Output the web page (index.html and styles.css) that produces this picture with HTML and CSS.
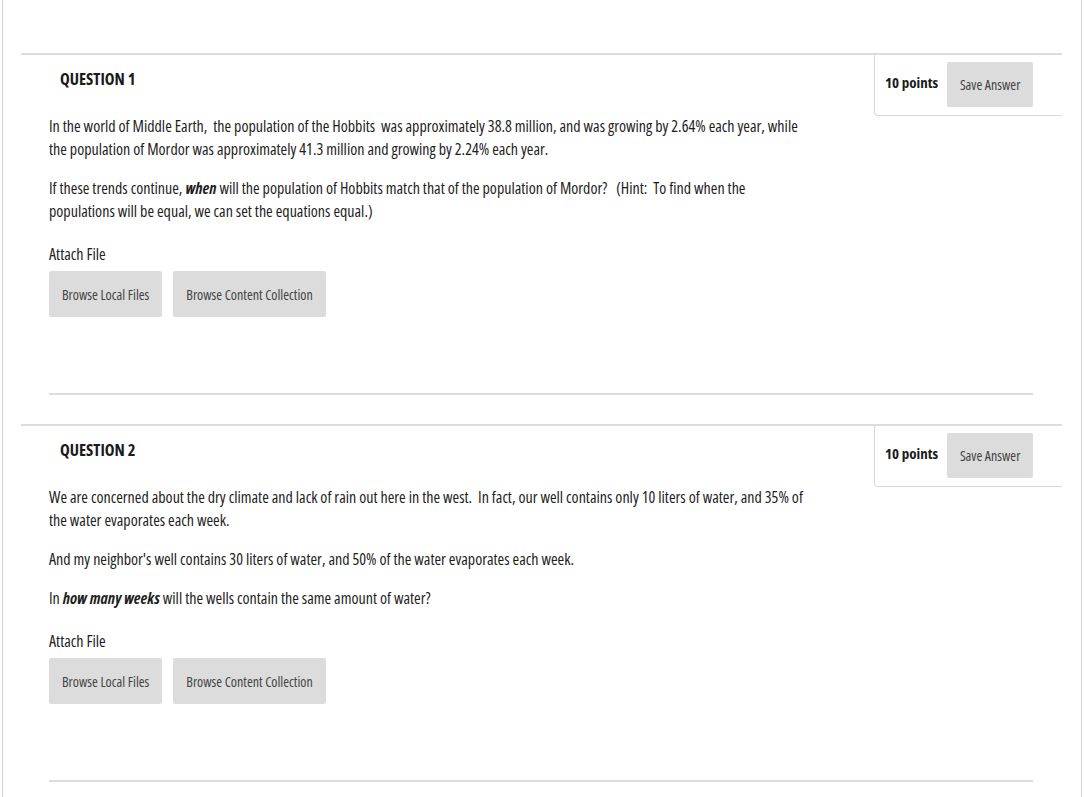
FILE: index.html
```html
<!DOCTYPE html>
<html lang="en">
<head>
<meta charset="utf-8">
<title>Test</title>
<link rel="stylesheet" href="styles.css">
</head>
<body>
<div class="page">
  <section class="question">
    <header class="q-head">
      <h3 class="q-title">QUESTION 1</h3>
      <div class="q-points">
        <span class="points">10 points</span>
        <button class="btn save">Save Answer</button>
      </div>
    </header>
    <div class="q-body">
      <p class="txt">In the world of Middle Earth,&nbsp; the population of the Hobbits&nbsp; was approximately 38.8 million, and was growing by 2.64% each year, while<br>the population of Mordor was approximately 41.3 million and growing by 2.24% each year.</p>
      <p class="txt">If these trends continue, <b><i>when</i></b> will the population of Hobbits match that of the population of Mordor?&nbsp;&nbsp; (Hint:&nbsp; To find when the<br>populations will be equal, we can set the equations equal.)</p>
      <div class="attach">Attach File</div>
      <div class="btn-row">
        <button class="btn">Browse Local Files</button>
        <button class="btn">Browse Content Collection</button>
      </div>
    </div>
    <hr class="sep">
  </section>

  <section class="question">
    <header class="q-head">
      <h3 class="q-title">QUESTION 2</h3>
      <div class="q-points">
        <span class="points">10 points</span>
        <button class="btn save">Save Answer</button>
      </div>
    </header>
    <div class="q-body">
      <p class="txt">We are concerned about the dry climate and lack of rain out here in the west.&nbsp; In fact, our well contains only 10 liters of water, and 35% of<br>the water evaporates each week.</p>
      <p class="txt">And my neighbor's well contains 30 liters of water, and 50% of the water evaporates each week.</p>
      <p class="txt">In <b><i>how many weeks</i></b> will the wells contain the same amount of water?</p>
      <div class="attach">Attach File</div>
      <div class="btn-row">
        <button class="btn">Browse Local Files</button>
        <button class="btn">Browse Content Collection</button>
      </div>
    </div>
    <hr class="sep">
  </section>
</div>
</body>
</html>
```

FILE: styles.css
```css
html, body {
  margin: 0;
  padding: 0;
  background: #ffffff;
}

body {
  font-family: "Open Sans", "Liberation Sans", sans-serif;
  font-stretch: 75%;
  color: #222222;
}

.page {
  margin-left: 2px;
  width: 1080px;
  min-height: 797px;
  border-left: 1px solid #d4d4d4;
  border-right: 1px solid #d4d4d4;
  padding: 53px 19px 0 18px;
  box-sizing: border-box;
}

.question {
  border-top: 2px solid #dcdcdc;
  margin-bottom: 29px;
}

.q-head {
  display: flex;
  justify-content: space-between;
  align-items: flex-start;
}

.q-title {
  margin: 14px 0 0 39px;
  font-size: 16.5px;
  font-weight: 700;
  line-height: 20px;
  color: #1a1a1a;
}

.q-points {
  display: flex;
  align-items: center;
  width: 188px;
  height: 61px;
  box-sizing: border-box;
  border-left: 1px solid #d8d8d8;
  border-bottom: 1px solid #d8d8d8;
  border-bottom-left-radius: 4px;
  padding: 0 28px 2px 10px;
  gap: 9px;
}

.points {
  font-size: 15px;
  font-weight: 700;
  line-height: 18px;
  margin-top: -4px;
  color: #1a1a1a;
}

.btn {
  font-family: inherit;
  font-stretch: 75%;
  font-size: 14px;
  color: #444444;
  background: #dcdcdc;
  border: none;
  border-radius: 2px;
  padding: 0 13px;
  height: 46px;
}

.save {
  width: 86px;
  height: 45px;
  padding: 0;
}

.q-body {
  padding: 0 0 0 28px;
}

.txt {
  font-size: 16px;
  line-height: 23px;
  margin: 0 0 16px 0;
  color: #1e1e1e;
}

.q-body .txt:first-child {
  margin-top: -1px;
}

.attach {
  font-size: 16px;
  line-height: 20px;
  margin-top: 21px;
  color: #222222;
}

.btn-row {
  display: flex;
  gap: 11px;
  margin-top: 7px;
}

.sep {
  margin: 76px 0 0 28px;
  width: 984px;
  border: none;
  border-top: 2px solid #dcdcdc;
  height: 0;
}
```
